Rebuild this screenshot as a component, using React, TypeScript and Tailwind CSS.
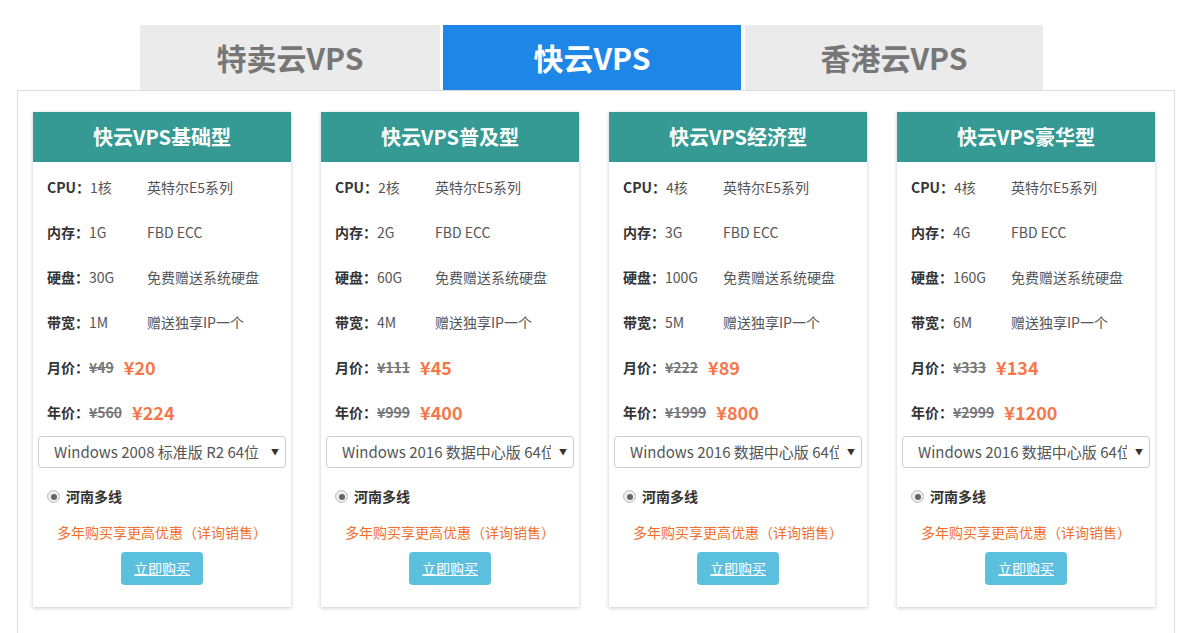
const plans = [
  { name: '快云VPS基础型', cpu: '1核', mem: '1G', disk: '30G', bw: '1M', mOld: '¥49', mNew: '¥20', yOld: '¥560', yNew: '¥224', os: 'Windows 2008 标准版 R2 64位' },
  { name: '快云VPS普及型', cpu: '2核', mem: '2G', disk: '60G', bw: '4M', mOld: '¥111', mNew: '¥45', yOld: '¥999', yNew: '¥400', os: 'Windows 2016 数据中心版 64位' },
  { name: '快云VPS经济型', cpu: '4核', mem: '3G', disk: '100G', bw: '5M', mOld: '¥222', mNew: '¥89', yOld: '¥1999', yNew: '¥800', os: 'Windows 2016 数据中心版 64位' },
  { name: '快云VPS豪华型', cpu: '4核', mem: '4G', disk: '160G', bw: '6M', mOld: '¥333', mNew: '¥134', yOld: '¥2999', yNew: '¥1200', os: 'Windows 2016 数据中心版 64位' },
]

const font = { fontFamily: '"Noto Sans CJK SC", "Noto Sans", sans-serif' }

function SpecRow({ label, value, note }: { label: string; value: string; note: string }) {
  return (
    <div className="flex h-[45px] items-center whitespace-nowrap text-[14px]">
      <span className="w-[100px] shrink-0 text-[#555]">
        <b className="font-bold text-[#333]">{label}：</b>
        {value}
      </span>
      <span className="text-[#555]">{note}</span>
    </div>
  )
}

function PriceRow({ label, old, now }: { label: string; old: string; now: string }) {
  return (
    <div className="flex h-[45px] items-center gap-[10px] whitespace-nowrap">
      <span className="text-[14px]">
        <b className="font-bold text-[#333]">{label}：</b>
        <b className="font-bold text-[#777] line-through">{old}</b>
      </span>
      <span className="text-[18px] font-bold text-[#f4784a]">{now}</span>
    </div>
  )
}

function PlanCard({ plan }: { plan: (typeof plans)[number] }) {
  return (
    <div className="w-[258px] shrink-0 bg-white shadow-[0_1px_4px_rgba(0,0,0,0.22)]">
      <div className="flex h-[50px] items-center justify-center bg-[#349a93] text-[20px] font-bold text-white">
        {plan.name}
      </div>
      <div className="px-[14px] pt-[3px]">
        <SpecRow label="CPU" value={plan.cpu} note="英特尔E5系列" />
        <SpecRow label="内存" value={plan.mem} note="FBD ECC" />
        <SpecRow label="硬盘" value={plan.disk} note="免费赠送系统硬盘" />
        <SpecRow label="带宽" value={plan.bw} note="赠送独享IP一个" />
        <PriceRow label="月价" old={plan.mOld} now={plan.mNew} />
        <PriceRow label="年价" old={plan.yOld} now={plan.yNew} />
      </div>
      <div className="mx-[5px] mt-[1px] flex h-[32px] items-center rounded border border-[#ccc] pl-[15px] pr-[6px]">
        <span className="min-w-0 flex-1 overflow-hidden whitespace-nowrap text-[15px] text-[#555]">{plan.os}</span>
        <span className="ml-2 shrink-0 text-[8px] text-[#333]">▼</span>
      </div>
      <div className="mt-[18px] flex items-center gap-[6px] pl-[14px]">
        <span className="flex h-[13px] w-[13px] items-center justify-center rounded-full border border-[#bbb] bg-[#eee]">
          <span className="h-[6px] w-[6px] rounded-full bg-[#666]" />
        </span>
        <span className="text-[14px] font-bold text-[#333]">河南多线</span>
      </div>
      <div className="mt-[15px] text-center text-[14px] text-[#f0702e]">多年购买享更高优惠（详询销售）</div>
      <div className="mt-[9px] flex justify-center pb-[22px]">
        <button className="flex h-[33px] w-[82px] items-center justify-center rounded-[4px] bg-[#5bc0de] text-[14px] text-white underline">立即购买</button>
      </div>
    </div>
  )
}

export default function App() {
  return (
    <div className="min-h-[633px] bg-white pt-[25px] pl-[17px]" style={font}>
      <div className="flex pl-[123px]">
        <div className="flex h-[65px] w-[300px] items-center justify-center bg-[#ebebeb] text-[30px] font-bold text-[#777]">特卖云VPS</div>
        <div className="ml-[3px] flex h-[65px] w-[298px] items-center justify-center bg-[#1e86e6] text-[30px] font-bold text-white">快云VPS</div>
        <div className="ml-[4px] flex h-[65px] w-[298px] items-center justify-center bg-[#ebebeb] text-[30px] font-bold text-[#777]">香港云VPS</div>
      </div>
      <div className="w-[1158px] border border-[#ddd] pt-[21px] pb-[40px] pl-[15px]">
        <div className="flex gap-[30px]">
          {plans.map((p) => (
            <PlanCard key={p.name} plan={p} />
          ))}
        </div>
      </div>
    </div>
  )
}
